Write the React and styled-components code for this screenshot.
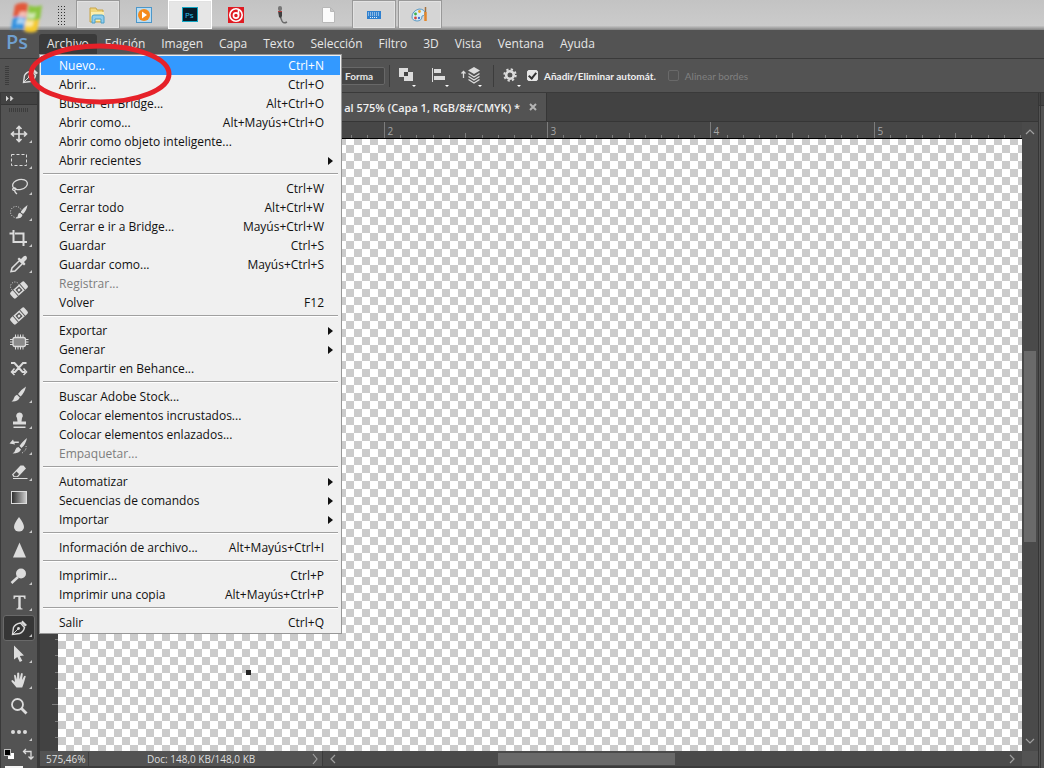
import React from 'react'
import styled, { createGlobalStyle } from 'styled-components'

const menus = ['Archivo', 'Edición', 'Imagen', 'Capa', 'Texto', 'Selección', 'Filtro', '3D', 'Vista', 'Ventana', 'Ayuda']

const groups = [
    [
        { label: 'Nuevo...', keys: 'Ctrl+N', active: true },
        { label: 'Abrir...', keys: 'Ctrl+O' },
        { label: 'Buscar en Bridge...', keys: 'Alt+Ctrl+O' },
        { label: 'Abrir como...', keys: 'Alt+Mayús+Ctrl+O' },
        { label: 'Abrir como objeto inteligente...' },
        { label: 'Abrir recientes', sub: true },
    ],
    [
        { label: 'Cerrar', keys: 'Ctrl+W' },
        { label: 'Cerrar todo', keys: 'Alt+Ctrl+W' },
        { label: 'Cerrar e ir a Bridge...', keys: 'Mayús+Ctrl+W' },
        { label: 'Guardar', keys: 'Ctrl+S' },
        { label: 'Guardar como...', keys: 'Mayús+Ctrl+S' },
        { label: 'Registrar...', disabled: true },
        { label: 'Volver', keys: 'F12' },
    ],
    [
        { label: 'Exportar', sub: true },
        { label: 'Generar', sub: true },
        { label: 'Compartir en Behance...' },
    ],
    [
        { label: 'Buscar Adobe Stock...' },
        { label: 'Colocar elementos incrustados...' },
        { label: 'Colocar elementos enlazados...' },
        { label: 'Empaquetar...', disabled: true },
    ],
    [
        { label: 'Automatizar', sub: true },
        { label: 'Secuencias de comandos', sub: true },
        { label: 'Importar', sub: true },
    ],
    [{ label: 'Información de archivo...', keys: 'Alt+Mayús+Ctrl+I' }],
    [
        { label: 'Imprimir...', keys: 'Ctrl+P' },
        { label: 'Imprimir una copia', keys: 'Alt+Mayús+Ctrl+P' },
    ],
    [{ label: 'Salir', keys: 'Ctrl+Q' }],
]

const Bandage = () => (
    <g transform="rotate(-42 15 12)">
        <rect x="5.500" y="8" width="19" height="8" rx="2" fill="#dcdcdc" />
        <path d="M10.500 8v8M19.500 8v8" stroke="#535353" strokeWidth="1" />
        <rect x="12.500" y="9.500" width="5" height="5" fill="#535353" />
        <circle cx="15" cy="12" r="1.400" fill="#dcdcdc" />
    </g>
)

const PenShape = () => (
    <>
        <path d="M8.500 18.500 9.500 11.500Q11 8 16.500 7L20.500 11.500Q19.500 16 15.500 17.500Z" fill="none" stroke="#dcdcdc" strokeWidth="1.400" />
        <path d="M8.500 18.500 14 13" stroke="#dcdcdc" />
        <circle cx="14.500" cy="12.500" r="1.400" fill="#dcdcdc" />
        <path d="M17 6.500 18.500 4.500 23 9 21 10.500Z" fill="#dcdcdc" />
    </>
)

const tools = [
    { name: 'Mover', more: true, art: <path d="M15 4.500v15M7.500 12h15M12.500 7 15 4.500 17.500 7M12.500 17l2.500 2.500 2.500-2.500M10 9.500 7.500 12l2.500 2.500M20 9.500l2.500 2.500-2.500 2.500" fill="none" stroke="#dcdcdc" strokeWidth="1.700" /> },
    { name: 'Marco rectangular', more: true, art: <rect x="7.500" y="6.500" width="15" height="11" fill="none" stroke="#dcdcdc" strokeDasharray="3 2" /> },
    {
        name: 'Lazo', more: true, art: <g fill="none" stroke="#dcdcdc" strokeWidth="1.300">
            <ellipse cx="16" cy="10.500" rx="7.500" ry="5" transform="rotate(-12 16 10.500)" />
            <path d="M9 14.500c2-1.500 4 .5 2 1.500s-3-1-2-1.500M10.500 16.500q.5 2 2.500 3.500" />
        </g>
    },
    {
        name: 'Selección rápida', more: true, art: <g>
            <circle cx="12" cy="12" r="5.500" fill="none" stroke="#dcdcdc" strokeDasharray="1 1.500" />
            <path d="M23.500 5Q18 9 17 12l2 2Q22.500 11 23.500 5ZM16 12.800 18.500 15Q17.500 19 11.500 18.500 14 17 14 15T16 12.800Z" fill="#dcdcdc" />
        </g>
    },
    { name: 'Recortar', more: true, art: <path d="M5.500 7.500H8M9.500 4v12H23M11 7.500h8.500V20M6 7.500h3" fill="none" stroke="#dcdcdc" strokeWidth="2" /> },
    {
        name: 'Cuentagotas', more: true, art: <g>
            <path d="M7 19.500 8 16l7.500-7.500 3 3L11 19Z" fill="none" stroke="#dcdcdc" strokeWidth="1.500" />
            <path d="M13.500 7l1.500-1.500 2 1.500 2.500-2.500Q21.500 3 22.500 4.500T22.500 7.500L20 10l1.500 2-1.500 1.500Z" fill="#dcdcdc" />
        </g>
    },
    { name: 'Pincel corrector puntual', art: <g><circle cx="11" cy="8.500" r="4.500" fill="none" stroke="#dcdcdc" strokeDasharray="1 1.500" /><Bandage /></g> },
    { name: 'Pincel corrector', art: <Bandage /> },
    {
        name: 'Parche', art: <g stroke="#dcdcdc">
            <rect x="9" y="7.500" width="12.500" height="9" rx="2" fill="#8b8b8b" strokeWidth="1.300" />
            <path d="M11.500 4.500v3M14 4.500v3M16.500 4.500v3M19 4.500v3M11.500 16.500v3M14 16.500v3M16.500 16.500v3M19 16.500v3M6 9.500h3M6 12h3M6 14.500h3M21.500 9.500h3M21.500 12h3M21.500 14.500h3" />
        </g>
    },
    {
        name: 'Mover con detección', art: <g fill="none" stroke="#dcdcdc" strokeWidth="2">
            <path d="M7 7h3.500l8 9H21M8 16h3l8-9h3.500" />
            <path d="M10.500 12.500 7.500 16l3 3M19.500 12.500l3 3.500-3 3" strokeWidth="1.500" />
        </g>
    },
    { name: 'Pincel', more: true, art: <path d="M22 4.500Q16.500 8 14 12l2.500 2.500Q20.500 11 22 4.500ZM13 12.800 15.800 15.500Q14 20 7.500 19.500 9.500 18.500 10 16T13 12.800Z" fill="#dcdcdc" /> },
    { name: 'Tampón', more: true, art: <path d="M15.500 4.500a3.300 3.300 0 0 1 2.500 5.500l-.5 3.500h4.500v3H9v-3h4.500L13 10a3.300 3.300 0 0 1 2.500-5.500ZM9.500 18.500h12V20h-12z" fill="#dcdcdc" /> },
    {
        name: 'Pincel de historia', more: true, art: <g fill="#dcdcdc">
            <path d="M23 4Q17.500 8.500 15.500 12l2 2Q21.500 11 23 4ZM14.500 13 17 15.500Q15.500 19.500 8.500 19.500 11 18 11.500 15.500T14.500 13Z" />
            <path d="M5.500 9.500 9 5.500l.8 2h5V9H10.500l.5 1.500Z" />
            <path d="M22 12Q23 16 18 19" fill="none" stroke="#dcdcdc" strokeDasharray="1 1.500" />
        </g>
    },
    {
        name: 'Borrador', more: true, art: <g>
            <path d="m8 14.500 8.500-9h3L22 8.500 14 17H9.500Z" fill="#dcdcdc" />
            <path d="m9.500 14.500 3-3L15 14l-2 2.200h-2.500Z" fill="#535353" />
            <path d="M9 18.500h14.500" stroke="#dcdcdc" />
        </g>
    },
    {
        name: 'Degradado', art: <g>
            <linearGradient id="shade"><stop stopColor="#2b2b2b" /><stop offset="1" stopColor="#cfcfcf" /></linearGradient>
            <rect x="7.500" y="5.500" width="15" height="12" fill="url(#shade)" stroke="#dcdcdc" />
        </g>
    },
    { name: 'Desenfocar', more: true, art: <path d="M15 5q5 6.500 5 10a5 4.500 0 0 1-10 0Q10 11.500 15 5Z" fill="#dcdcdc" /> },
    { name: 'Enfocar', art: <path d="M15.500 4.500 22 19.500H9Z" fill="#dcdcdc" /> },
    { name: 'Sobreexponer', more: true, art: <g><circle cx="17" cy="9.500" r="5" fill="#dcdcdc" /><path d="M14 13 7.500 19" stroke="#dcdcdc" strokeWidth="2.500" /></g> },
    { name: 'Texto', more: true, art: <path d="M9.500 5.500h12v3.500h-1q-.3-2-1.500-2h-2.300v10q0 1.500 1.800 1.500v1h-6v-1q1.800 0 1.800-1.500V7H12q-1.200 0-1.500 2h-1Z" fill="#dcdcdc" /> },
    { name: 'Pluma', more: true, selected: true, art: <PenShape /> },
    { name: 'Selección de trazado', more: true, art: <path d="M10 3.500v14l3.300-2.500 2.500 5 2.500-1.200-2.500-4.800 4.200-.5Z" fill="#dcdcdc" /> },
    { name: 'Mano', more: true, art: <path d="M12.500 19.500 7.500 13.500q-.5-1.500 1-1.500l2.500 2L10 7.500q.8-1.300 1.800 0l1.200 4 .2-6.500q1-1.200 2 0l.3 6.500L17 5.500q1-1 1.800.3L18 12l2.200-4q1.300-.8 1.500.5l-2 7-1.500 4Z" fill="#dcdcdc" /> },
    { name: 'Zoom', art: <g><circle cx="13.500" cy="10.500" r="5.500" fill="none" stroke="#dcdcdc" strokeWidth="1.800" /><path d="m17 14 5.500 5.500" stroke="#dcdcdc" strokeWidth="2.800" /></g> },
    { name: 'Editar barra', more: true, art: <g fill="#dcdcdc"><circle cx="9" cy="12" r="2" /><circle cx="15" cy="12" r="2" /><circle cx="21" cy="12" r="2" /></g> },
]

const apps = [
    {
        name: 'Explorador', open: true, art: <g>
            <path d="M3 4h6l1 2h6v12H3z" fill="#f0d77c" stroke="#c9a548" />
            <path d="M4 8h13v9H4z" fill="#fbeeb0" />
            <path d="M5 19v-6q0-2 2-2h8q2 0 2 2v6h-3v-4H8v4Z" fill="#8fcdee" stroke="#4b9fc8" />
        </g>
    },
    {
        name: 'Reproductor', art: <g>
            <rect x="3.500" y="3.500" width="15" height="15" fill="#b9dcf2" stroke="#4d97c9" />
            <circle cx="11" cy="11" r="6" fill="#f58a1a" /><path d="m9 7.500 5 3.500-5 3.500Z" fill="#fff" />
        </g>
    },
    {
        name: 'Photoshop', open: true, active: true, art: <g>
            <rect x="3.500" y="3.500" width="15" height="14" fill="#071d2b" stroke="#12a6c4" />
            <text x="6" y="14" fontSize="8" fontFamily="Open Sans, sans-serif" fill="#2fc1ea">Ps</text>
        </g>
    },
    {
        name: 'Grabador', art: <g fill="none" stroke="#fff" strokeWidth="1.600">
            <rect x="3" y="3" width="16" height="16" fill="#e01b22" stroke="none" />
            <circle cx="11" cy="11" r="6.200" /><circle cx="11" cy="11.500" r="2.600" /><path d="M13.500 6v5.500" />
        </g>
    },
    {
        name: 'Micrófono', art: <g fill="none">
            <path d="M9 6v6l2 5q1.500 3 5 1" stroke="#6b6b6b" strokeWidth="1.500" />
            <rect x="7" y="2" width="4" height="5" rx="2" fill="#777" /><path d="M7 7h4v5l-1 2-2-1Z" fill="#3f3f3f" /><path d="M7 7.500h4" stroke="#b43e3e" />
        </g>
    },
    { name: 'Documento', art: <path d="M5.500 3.500h8l4 4v11h-12Z M13.500 3.500v4h4" fill="#fbfbfb" stroke="#b8b8b8" /> },
    {
        name: 'Teclado', open: true, art: <g>
            <rect x="4" y="7" width="14" height="8" fill="#2f80cf" />
            <path d="M5 9h12M5 11h12M7 13.500h8" stroke="#e6f1fb" strokeDasharray="1 1" />
        </g>
    },
    {
        name: 'Paint', open: true, art: <g>
            <path d="M3 13q0-6 7-8 6 0 6 5-1 2-3 2 0 5-5 5-5-.5-5-4Z" fill="#d9edf8" stroke="#5b9ac4" />
            <circle cx="6.500" cy="10" r="1.400" fill="#3fae49" /><circle cx="10.500" cy="7.500" r="1.400" fill="#e8a92c" /><circle cx="6.500" cy="14" r="1.400" fill="#d54538" /><circle cx="10" cy="14" r="1.200" fill="#4b6fd1" />
            <path d="M16.500 8v9" stroke="#e3862a" strokeWidth="2.500" /><path d="M16.500 8V3" stroke="#a3703c" strokeWidth="1.500" />
        </g>
    },
]

// ruler ticks: ten per unit, the fifth one a little longer
const UNIT = 163.3
const topTicks = Array.from({ length: 60 }, (_, i) => ({ x: Math.round(17 + (i * UNIT) / 10) + 0.5, n: i }))
const sideTicks = Array.from({ length: 37 }, (_, i) => ({ y: Math.round(10 + (i * UNIT) / 10) + 0.5, n: i }))

function MenuRow({ item }) {
    return (
        <Row $active={item.active} disabled={item.disabled} role="menuitem">
            <span>{item.label}</span>
            {item.keys && <span>{item.keys}</span>}
            {item.sub && <svg width="5" height="8"><path d="M0 0 5 4 0 8Z" fill="#111" /></svg>}
        </Row>
    )
}

function Chevron({ d }) {
    return <svg width="12" height="12" viewBox="0 0 12 12"><path d={d} fill="none" stroke="#a0a0a0" strokeWidth="1.200" /></svg>
}

function App() {
    return (
        <Screen>
            <GlobalStyle />
            <Taskbar>
                <StartButton aria-label="Inicio">
                    <svg width="40" height="38" viewBox="0 0 40 38">
                        <defs><filter id="soft"><feGaussianBlur stdDeviation="1.800" /></filter></defs>
                        <g filter="url(#soft)">
                            <path d="M7 5q7-4 13-1l-2 14q-6-3-13-1Z" fill="#e2583a" />
                            <path d="M21 5q6 3 13 0l-2 14q-7 3-13 0Z" fill="#8cc63f" />
                            <path d="M5 18q6-3 13 0l-2 12q-6-3-13 0Z" fill="#2f8fe0" />
                            <path d="M18 19q7 3 13 0l-2 12q-6 3-13 0Z" fill="#f5c92e" />
                        </g>
                        <path d="M11 12q4-2 8 0l-1 6q-4-2-8 0ZM20 12q4 2 8 0l-1 6q-4 2-8 0ZM9 19q4-2 8 0l-1 6q-4-2-8 0ZM18 20q4 2 8 0l-1 6q-4 2-8 0Z" fill="#fff" opacity=".6" filter="url(#soft)" />
                    </svg>
                </StartButton>
                <TaskGrip />
                {apps.map((app) => (
                    <AppButton key={app.name} $open={app.open} $active={app.active} aria-label={app.name}>
                        <svg width="22" height="22" viewBox="0 0 22 22">{app.art}</svg>
                    </AppButton>
                ))}
            </Taskbar>

            <MenuBar>
                <Brand>Ps</Brand>
                {menus.map((name, i) => <MenuTitle key={name} $open={i === 0}>{name}</MenuTitle>)}
            </MenuBar>

            <Options>
                <OptionGrip />
                <PenPreview><svg width="30" height="24" viewBox="0 0 30 24"><PenShape /></svg></PenPreview>
                <Mode aria-label="Modo"><option>Forma</option></Mode>
                <Divider />
                <IconButton aria-label="Operaciones de trazado">
                    <svg width="24" height="28" viewBox="0 0 24 28">
                        <path d="M5 6h9v4h5v9h-9v-4H5Z" fill="#dcdcdc" /><rect x="10" y="10" width="4" height="4" fill="#444" /><path d="M18 23h4l-2 2Z" fill="#fff" />
                    </svg>
                </IconButton>
                <IconButton aria-label="Alineación">
                    <svg width="24" height="28" viewBox="0 0 24 28">
                        <path d="M5.500 6v14" stroke="#dcdcdc" /><path d="M7 7h7v4H7zM7 14h11v4H7z" fill="#dcdcdc" /><path d="M18 23h4l-2 2Z" fill="#fff" />
                    </svg>
                </IconButton>
                <IconButton aria-label="Disposición">
                    <svg width="24" height="28" viewBox="0 0 24 28">
                        <path d="m14 5 6 3.500-6 3.500-6-3.500Z" fill="#dcdcdc" />
                        <path d="m8.500 11.500 5.500 3.500 5.500-3.500M8.500 14.500l5.500 3.500 5.500-3.500M8.500 17.500l5.500 3.500 5.500-3.500M3.500 16V9.500M1.500 11.500l2-2 2 2" fill="none" stroke="#dcdcdc" strokeWidth="1.300" /><path d="M18 23h4l-2 2Z" fill="#fff" />
                    </svg>
                </IconButton>
                <Divider />
                <IconButton aria-label="Ajustes">
                    <svg width="24" height="28" viewBox="0 0 24 28">
                        <circle cx="12" cy="13" r="3.800" fill="none" stroke="#dcdcdc" strokeWidth="2.600" />
                        <circle cx="12" cy="13" r="5.700" fill="none" stroke="#dcdcdc" strokeWidth="2" strokeDasharray="2.240 2.240" />
                        <path d="M19 23h4l-2 2Z" fill="#fff" />
                    </svg>
                </IconButton>
                <Check><input type="checkbox" defaultChecked />Añadir/Eliminar automát.</Check>
                <Check $off><input type="checkbox" disabled />Alinear bordes</Check>
            </Options>

            <Workspace>
                <Toolbar>
                    <Expand aria-label="Expandir">
                        <svg width="9" height="7"><path d="m0 1 2.500 2.500L0 6ZM4.500 1 7 3.500 4.500 6Z" fill="#ddd" stroke="#ddd" strokeWidth=".5" /></svg>
                    </Expand>
                    <ToolGrip />
                    {tools.map((tool) => (
                        <Tool key={tool.name} $selected={tool.selected} aria-label={tool.name}>
                            <svg width="30" height="24" viewBox="0 0 30 24">
                                {tool.art}
                                {tool.more && <path d="M28 18v3h-3Z" fill="#c8c8c8" />}
                            </svg>
                        </Tool>
                    ))}
                    <Swatches>
                        <svg width="32" height="23" viewBox="0 0 32 23">
                            <rect x="5" y="8" width="6" height="6" fill="#fff" /><rect x="1.500" y="4.500" width="6" height="6" fill="#000" stroke="#bbb" />
                            <path d="M21 6.500h7v7M23 4l-2.500 2.500L23 9M25.500 11.500 28 14l2.500-2.500" fill="none" stroke="#dcdcdc" strokeWidth="1.300" />
                            <rect x="2" y="21" width="18" height="2" fill="#f4f4f4" />
                        </svg>
                    </Swatches>
                </Toolbar>

                <Document>
                    <Tabs>
                        <Tab>
                            <span>al 575% (Capa 1, RGB/8#/CMYK) *</span>
                            <CloseTab aria-label="Cerrar pestaña">
                                <svg width="8" height="8"><path d="m1 1 6 6M7 1 1 7" stroke="#b5b5b5" strokeWidth="2" /></svg>
                            </CloseTab>
                        </Tab>
                    </Tabs>
                    <Sheet>
                        <View>
                            <TopRuler>
                                <svg width="100%" height="16">
                                    {topTicks.map(({ x, n }) => (
                                        <line key={n} x1={x} x2={x} y1={n % 10 === 0 ? 0 : n % 5 === 0 ? 11 : 13} y2="16" stroke="#7c7c7c" />
                                    ))}
                                    {topTicks.filter(({ n }) => n % 10 === 0).map(({ x, n }) => (
                                        <text key={n} x={x + 3} y="13" fill="#a6a6a6" fontSize="10">{n / 10}</text>
                                    ))}
                                </svg>
                            </TopRuler>
                            <Stage>
                                <SideRuler>
                                    <svg width="18" height="100%">
                                        {sideTicks.map(({ y, n }) => (
                                            <line key={n} y1={y} y2={y} x1={n % 10 === 4 ? 12 : 15} x2="18" stroke="#7c7c7c" />
                                        ))}
                                    </svg>
                                </SideRuler>
                                <Canvas><Pixel /></Canvas>
                            </Stage>
                        </View>
                        <VerticalScroll>
                            <Chevron d="m2 8 4-4 4 4" />
                            <VerticalThumb />
                            <Chevron d="m2 4 4 4 4-4" />
                        </VerticalScroll>
                    </Sheet>
                    <Status>
                        <Zoom>575,46%</Zoom>
                        <Info>Doc: 148,0 KB/148,0 KB</Info>
                        <Chevron d="m4 1 4 5-4 5" />
                        <HorizontalScroll>
                            <Chevron d="M8 2 4 6l4 4" />
                            <HorizontalThumb />
                            <Chevron d="m4 2 4 4-4 4" />
                        </HorizontalScroll>
                    </Status>
                </Document>
                <SidePanel />
            </Workspace>

            <FileMenu role="menu">
                {groups.map((group, i) => (
                    <Group key={i}>{group.map((item) => <MenuRow key={item.label} item={item} />)}</Group>
                ))}
            </FileMenu>
            <Mark width="146" height="64" viewBox="0 0 146 64">
                <ellipse cx="73" cy="32" rx="69" ry="28" fill="none" stroke="#e62129" strokeWidth="5" />
            </Mark>
        </Screen>
    )
}

export default App

const GlobalStyle = createGlobalStyle`
*, *::before, *::after {
    box-sizing: border-box;
}
body {
    margin: 0;
    font-family: "Open Sans", "Noto Sans", sans-serif;
    font-size: 12px;
}
button, select, input {
    font: inherit;
    color: inherit;
    margin: 0;
    padding: 0;
    border: 0;
    background: none;
}
svg {
    display: block;
    flex: none;
}
`

const Screen = styled.div`
position: relative;
display: flex;
flex-direction: column;
height: 100vh;
min-height: 660px;
overflow: hidden;
background: #535353;
color: #e6e6e6;
`

const Taskbar = styled.div`
display: flex;
flex: none;
align-items: flex-start;
gap: 2px;
height: 30px;
background: linear-gradient(#c3c3c3, #cbcbcb 85%, #858585);
`

const StartButton = styled.button`
position: relative;
z-index: 1;
width: 54px;
height: 30px;
padding-left: 8px;
overflow: visible;
`

const TaskGrip = styled.div`
width: 10px;
height: 22px;
margin: 5px 8px 0 0;
background: radial-gradient(circle, #333 0 1px, transparent 1px) 1px 0 / 3px 3px;
`

const AppButton = styled.button`
display: flex;
align-items: center;
justify-content: center;
width: 44px;
height: 29px;
border: 1px solid ${(p) => (p.$active ? '#fff' : p.$open ? '#999' : 'transparent')};
background: ${(p) => (p.$active ? '#e6e6e6' : p.$open ? '#d5d5d5' : 'none')};
box-shadow: ${(p) => (p.$open ? 'inset 0 0 0 1px #e2e2e2' : 'none')};
`

const MenuBar = styled.nav`
display: flex;
flex: none;
align-items: center;
height: 29px;
border-bottom: 1px solid #3a3a3a;
`

const Brand = styled.div`
width: 39px;
padding: 0 0 4px 6px;
color: #6f9fcf;
font-size: 20px;
font-weight: 600;
line-height: 24px;
`

const MenuTitle = styled.button`
height: 20px;
padding: 0 8px 2px;
border-radius: 3px 3px 0 0;
background: ${(p) => (p.$open ? '#3a3a3a' : 'none')};
`

const Options = styled.div`
display: flex;
flex: none;
align-items: center;
height: 34px;
border-bottom: 1px solid #3a3a3a;
font-family: Lato, "Open Sans", sans-serif;
font-size: 10px;
`

const OptionGrip = styled.div`
width: 4px;
height: 20px;
margin-left: 5px;
background: repeating-linear-gradient(#3c3c3c 0 1px, transparent 1px 2px);
`

const PenPreview = styled.div`
flex: none;
width: 320px;
padding-left: 6px;
`

const Mode = styled.select`
appearance: none;
width: 56px;
height: 18px;
padding-left: 15px;
border: 1px solid #686868;
border-radius: 2px;
background: #454545;
font-weight: 700;
`

const Divider = styled.div`
width: 1px;
height: 22px;
margin-left: 4px;
background: #3c3c3c;
`

const IconButton = styled.button`
width: 25px;
height: 28px;
margin: 0 4px;
`

const Check = styled.label`
display: flex;
align-items: center;
gap: 6px;
margin-right: 12px;
color: ${(p) => (p.$off ? '#808080' : '#efefef')};
font-weight: ${(p) => (p.$off ? 400 : 700)};
white-space: nowrap;
input{
    appearance: none;
    width: 11px;
    height: 11px;
    border: 1px solid #696969;
    border-radius: 2px;
}
input:checked{
    border-color: #e6e6e6;
    background: #e6e6e6;
}
input:checked::after{
    content: "";
    display: block;
    width: 5px;
    height: 8px;
    margin-left: 2px;
    border: solid #333;
    border-width: 0 2px 2px 0;
    rotate: 40deg;
}
`

const Workspace = styled.div`
display: flex;
flex: 1;
min-height: 0;
`

const Toolbar = styled.aside`
display: flex;
flex: none;
flex-direction: column;
align-items: center;
width: 40px;
border: solid #393939;
border-width: 0 3px 0 1px;
`

const Expand = styled.button`
width: 100%;
height: 12px;
padding-left: 5px;
border-bottom: 1px solid #363636;
background: #434343;
`

const ToolGrip = styled.div`
width: 20px;
height: 4px;
margin: 3px 0 9px;
background: repeating-linear-gradient(90deg, #3c3c3c 0 1px, transparent 1px 2px);
`

const Tool = styled.button`
display: flex;
flex: none;
align-items: center;
justify-content: center;
width: 32px;
height: 26px;
border: 1px solid ${(p) => (p.$selected ? '#696969' : 'transparent')};
border-radius: 3px;
background: ${(p) => (p.$selected ? '#363636' : 'none')};
`

const Swatches = styled.div`
height: 23px;
`

const Document = styled.main`
display: flex;
flex: 1;
flex-direction: column;
min-width: 0;
`

const Tabs = styled.div`
flex: none;
height: 29px;
border-bottom: 1px solid #363636;
background: #424242;
`

const Tab = styled.div`
display: flex;
align-items: center;
justify-content: flex-end;
gap: 9px;
width: 507px;
height: 28px;
padding-right: 9px;
border-right: 1px solid #363636;
background: #535353;
color: #f0f0f0;
font-size: 11px;
font-weight: 600;
`

const CloseTab = styled.button`
width: 8px;
height: 8px;
`

const Sheet = styled.div`
display: flex;
flex: 1;
min-height: 0;
`

const View = styled.div`
display: flex;
flex: 1;
flex-direction: column;
min-width: 0;
`

const TopRuler = styled.div`
flex: none;
height: 17px;
border-bottom: 1px solid #000;
background: #474747;
`

const Stage = styled.div`
display: flex;
flex: 1;
min-height: 0;
`

const SideRuler = styled.div`
flex: none;
width: 18px;
overflow: hidden;
background: #424242;
`

const Canvas = styled.div`
position: relative;
flex: 1;
background: repeating-conic-gradient(#fff 0 25%, #cbcbcb 0 50%) 0 6px / 16px 16px;
`

const Pixel = styled.div`
position: absolute;
left: 188px;
top: 531px;
width: 5px;
height: 5px;
background: #262626;
`

const VerticalScroll = styled.div`
display: flex;
flex: none;
flex-direction: column;
align-items: center;
width: 16px;
padding: 4px 0;
background: #4a4a4a;
`

const VerticalThumb = styled.div`
width: 12px;
height: 191px;
margin: 213px 0 auto;
background: #6a6a6a;
`

const Status = styled.footer`
display: flex;
flex: none;
align-items: center;
height: 17px;
border-bottom: 2px solid #3c3c3c;
color: #dedede;
font-size: 10px;
`

const Zoom = styled.div`
width: 49px;
padding-left: 6px;
border-right: 1px solid #3f3f3f;
`

const Info = styled.div`
width: 220px;
padding-left: 58px;
`

const HorizontalScroll = styled.div`
display: flex;
flex: 1;
align-items: center;
height: 15px;
margin: 0 16px 0 1px;
padding: 0 4px;
border-left: 1px solid #3a3a3a;
background: #4a4a4a;
`

const HorizontalThumb = styled.div`
width: 177px;
height: 12px;
margin: 0 auto 0 159px;
background: #6a6a6a;
`

const SidePanel = styled.aside`
flex: none;
width: 6px;
border-left: 3px double #363636;
background: linear-gradient(#424242 12px, #363636 12px 13px, #535353 13px);
`

const FileMenu = styled.div`
position: absolute;
left: 39px;
top: 54px;
width: 303px;
padding: 1px;
border: 1px solid #979797;
background: #f0f0f0;
color: #111;
line-height: 16px;
`

const Group = styled.div`
& + &::before{
    content: "";
    display: block;
    height: 2px;
    margin: 3px 2px 4px;
    border-top: 1px solid #a0a0a0;
    background: #fff;
}
`

const Row = styled.button`
display: flex;
align-items: center;
justify-content: space-between;
width: 100%;
height: 19px;
padding: 0 16px 0 18px;
background: ${(p) => (p.$active ? '#3399ff' : 'none')};
color: ${(p) => (p.disabled ? '#7d7d7d' : p.$active ? '#fff' : '#111')};
svg{
    margin-right: -9px;
}
`

const Mark = styled.svg`
position: absolute;
left: 27px;
top: 42px;
pointer-events: none;
`
